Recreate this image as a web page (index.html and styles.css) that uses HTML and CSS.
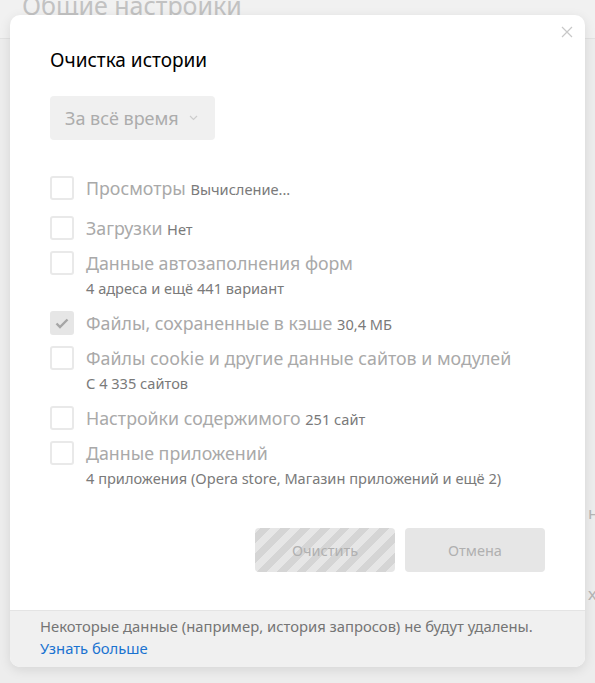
FILE: index.html
```html
<!DOCTYPE html>
<html lang="ru">
<head>
<meta charset="utf-8">
<link rel="stylesheet" href="styles.css">
</head>
<body>
<div class="page">
  <h1 class="page-title">Общие настройки</h1>
  <div class="page-body">
    <div class="bg-line bg-line-1">н</div>
    <div class="bg-line bg-line-2">х</div>
  </div>
</div>

<div class="dialog">
  <div class="dialog-main">
    <button class="close" aria-label="Закрыть">
      <svg width="12" height="12" viewBox="0 0 12 12"><path d="M1 1L11 11M11 1L1 11" stroke="#c8c8c8" stroke-width="1.2" fill="none"/></svg>
    </button>
    <h2 class="title">Очистка истории</h2>
    <div class="select">
      <span>За всё время</span>
      <svg width="9" height="6" viewBox="0 0 9 6"><path d="M1 1L4.5 4.5L8 1" stroke="#cccccc" stroke-width="1.2" fill="none"/></svg>
    </div>
    <ul class="options">
      <li class="opt opt-first">
        <span class="box"></span>
        <div class="opt-text"><div class="label">Просмотры <span class="note">Вычисление...</span></div></div>
      </li>
      <li class="opt">
        <span class="box"></span>
        <div class="opt-text"><div class="label">Загрузки <span class="note">Нет</span></div></div>
      </li>
      <li class="opt">
        <span class="box"></span>
        <div class="opt-text"><div class="label">Данные автозаполнения форм</div><div class="sub">4 адреса и ещё 441 вариант</div></div>
      </li>
      <li class="opt">
        <span class="box box-checked"><svg width="14" height="11" viewBox="0 0 14 11"><path d="M1.5 5.5L5 9L12.5 1.5" stroke="#a6a6a6" stroke-width="2.4" fill="none"/></svg></span>
        <div class="opt-text"><div class="label">Файлы, сохраненные в кэше <span class="note">30,4 МБ</span></div></div>
      </li>
      <li class="opt">
        <span class="box"></span>
        <div class="opt-text"><div class="label">Файлы cookie и другие данные сайтов и модулей</div><div class="sub">С 4 335 сайтов</div></div>
      </li>
      <li class="opt">
        <span class="box"></span>
        <div class="opt-text"><div class="label">Настройки содержимого <span class="note">251 сайт</span></div></div>
      </li>
      <li class="opt">
        <span class="box"></span>
        <div class="opt-text"><div class="label">Данные приложений</div><div class="sub">4 приложения (Opera store, Магазин приложений и ещё 2)</div></div>
      </li>
    </ul>
    <div class="actions">
      <button class="btn btn-busy">Очистить</button>
      <button class="btn">Отмена</button>
    </div>
  </div>
  <div class="dialog-footer">
    <div class="footer-text">Некоторые данные (например, история запросов) не будут удалены.</div>
    <a class="footer-link" href="#">Узнать больше</a>
  </div>
</div>
</body>
</html>
```
FILE: styles.css
```css
html, body {
  margin: 0;
  padding: 0;
}
body {
  width: 595px;
  height: 683px;
  overflow: hidden;
  background: #ededed;
  font-family: "Noto Sans", "Open Sans", sans-serif;
  position: relative;
}
.page {
  height: 683px;
}
.page-title {
  margin: 0;
  padding-left: 22px;
  margin-top: -12px;
  height: 50px;
  font-size: 25px;
  font-weight: 400;
  line-height: 34px;
  color: #c2c2c2;
  border-bottom: 1px solid #e2e2e2;
  background: #f1f1f1;
}
.page-body {
  padding-left: 588px;
  padding-top: 462px;
}
.bg-line {
  font-size: 17px;
  color: #b5b5b5;
  white-space: nowrap;
}
.bg-line-2 {
  margin-top: 58px;
}
.dialog {
  position: absolute;
  left: 10px;
  top: 15px;
  width: 575px;
  height: 652px;
  background: #fff;
  border-radius: 10px;
  box-shadow: 0 3px 12px rgba(0,0,0,0.10);
  display: flex;
  flex-direction: column;
  overflow: hidden;
}
.dialog-main {
  flex: 1;
  padding: 33px 40px 0;
  position: relative;
}
.close {
  position: absolute;
  right: 12px;
  top: 11px;
  border: 0;
  background: none;
  padding: 0;
  width: 12px;
  height: 12px;
  display: block;
}
.close svg { display: block; }
.title {
  margin: 0;
  font-size: 19px;
  line-height: 24px;
  font-weight: 400;
  color: #000;
}
.select {
  margin-top: 24px;
  width: 165px;
  height: 44px;
  box-sizing: border-box;
  background: #f0f0f0;
  border-radius: 4px;
  display: flex;
  align-items: center;
  padding-left: 15px;
  gap: 10px;
  font-size: 18px;
  color: #acacac;
}
.options {
  list-style: none;
  margin: 36px 0 0;
  padding: 0;
  display: flex;
  flex-direction: column;
  gap: 11px;
}
.opt {
  display: flex;
  align-items: flex-start;
  gap: 12px;
}
.opt-first { margin-bottom: 5px; }
.box {
  width: 24px;
  height: 24px;
  box-sizing: border-box;
  border: 2px solid #e9e9e9;
  border-radius: 3px;
  flex: none;
  display: flex;
  align-items: center;
  justify-content: center;
}
.box-checked {
  background: #e6e6e6;
  border-color: #e6e6e6;
}
.label {
  font-size: 17.8px;
  line-height: 24px;
  height: 24px;
  color: #a9a9a9;
  white-space: nowrap;
}
.note {
  font-size: 14.6px;
  line-height: 1;
  color: #7a7a7a;
}
.sub {
  margin-top: 1px;
  font-size: 14.6px;
  line-height: 24px;
  height: 24px;
  color: #7a7a7a;
  white-space: nowrap;
}
.actions {
  display: flex;
  justify-content: flex-end;
  gap: 10px;
  margin-top: 38px;
}
.btn {
  width: 140px;
  height: 44px;
  border: 0;
  border-radius: 4px;
  background: #e6e6e6;
  color: #b0b0b0;
  font-family: inherit;
  font-size: 14.5px;
  padding: 0;
}
.btn-busy {
  background: repeating-linear-gradient(-45deg, #e6e6e6 0 7px, #d5d5d5 7px 14px);
}
.dialog-footer {
  background: #f0f0f0;
  border-top: 1px solid #e4e4e4;
  padding: 4px 30px 7px;
  height: 57px;
  box-sizing: border-box;
}
.footer-text {
  font-size: 14.8px;
  line-height: 22px;
  color: #757575;
  white-space: nowrap;
}
.footer-link {
  display: block;
  font-size: 14.8px;
  line-height: 22px;
  color: #1a73d0;
  text-decoration: none;
}
```
